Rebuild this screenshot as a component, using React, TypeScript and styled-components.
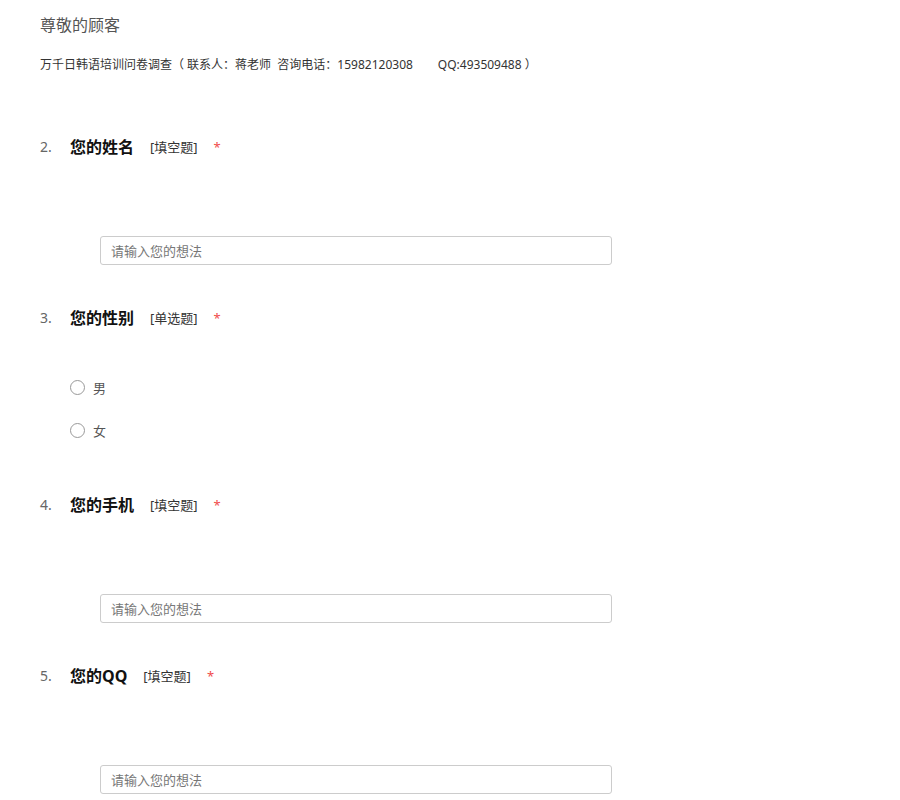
import { createGlobalStyle, styled } from "styled-components"

const GlobalStyle = createGlobalStyle`
  html, body {
    margin: 0;
    padding: 0;
    background: #fff;
  }
  body {
    font-family: "Noto Sans", "Noto Sans CJK SC", sans-serif;
    color: #333;
  }
`

const Page = styled.div`
  display: flex;
  flex-direction: column;
  padding: 14px 0 0 40px;
`

const Greeting = styled.div`
  font-size: 16px;
  line-height: 22px;
  color: #555;
`

const Intro = styled.div`
  margin-top: 20px;
  font-size: 12px;
  line-height: 18px;
  color: #333;
  white-space: pre;
`

const QuestionList = styled.div`
  display: flex;
  flex-direction: column;
  margin-top: 60px;
`

const Question = styled.div<{ $extra?: number }>`
  display: flex;
  flex-direction: column;
  padding-bottom: ${({ $extra }) => 40 + ($extra ?? 0)}px;
`

const TitleRow = styled.div`
  display: flex;
  align-items: center;
  height: 24px;
`

const Num = styled.span`
  width: 30px;
  font-size: 14px;
  color: #666;
`

const Title = styled.span`
  font-size: 16px;
  font-weight: 700;
  color: #111;
`

const Kind = styled.span`
  margin-left: 16px;
  font-size: 13px;
  color: #333;
`

const Required = styled.span`
  margin-left: 16px;
  font-size: 13px;
  color: #f04b4b;
  position: relative;
  top: 1px;
`

const TextInput = styled.input`
  margin: 78px 0 0 60px;
  width: 512px;
  height: 29px;
  box-sizing: border-box;
  border: 1px solid #ccc;
  border-radius: 3px;
  padding: 0 10px;
  font-family: inherit;
  font-size: 13px;
  color: #333;
  outline: none;

  &::placeholder {
    color: #777;
  }
`

const Options = styled.div`
  display: flex;
  flex-direction: column;
  gap: 23px;
  margin: 48px 0 0 30px;
`

const Option = styled.label`
  display: flex;
  align-items: center;
  height: 20px;
  gap: 8px;
  font-size: 13px;
  color: #555;
  cursor: pointer;
`

const Radio = styled.input`
  appearance: none;
  margin: 0;
  width: 15px;
  height: 15px;
  border: 1px solid #999;
  border-radius: 50%;
  background: #fff;

  &:checked {
    border-color: #1ea0fa;
    box-shadow: inset 0 0 0 3px #fff;
    background: #1ea0fa;
  }
`

type Q = {
  num: number
  title: string
  kind: string
  options?: string[]
}

const questions: Q[] = [
  { num: 2, title: "您的姓名", kind: "填空题" },
  { num: 3, title: "您的性别", kind: "单选题", options: ["男", "女"] },
  { num: 4, title: "您的手机", kind: "填空题" },
  { num: 5, title: "您的QQ", kind: "填空题" },
]

export default function App() {
  return (
    <>
      <GlobalStyle />
      <Page>
        <Greeting>尊敬的顾客</Greeting>
        <Intro>{"万千日韩语培训问卷调查（ 联系人：蒋老师  咨询电话：15982120308        QQ:493509488 ）"}</Intro>
        <QuestionList>
          {questions.map((q) => (
            <Question key={q.num} $extra={q.options ? 12 : 0}>
              <TitleRow>
                <Num>{q.num}.</Num>
                <Title>{q.title}</Title>
                <Kind>[{q.kind}]</Kind>
                <Required>*</Required>
              </TitleRow>
              {q.options ? (
                <Options>
                  {q.options.map((o) => (
                    <Option key={o}>
                      <Radio type="radio" name={`q${q.num}`} />
                      {o}
                    </Option>
                  ))}
                </Options>
              ) : (
                <TextInput type="text" placeholder="请输入您的想法" />
              )}
            </Question>
          ))}
        </QuestionList>
      </Page>
    </>
  )
}
